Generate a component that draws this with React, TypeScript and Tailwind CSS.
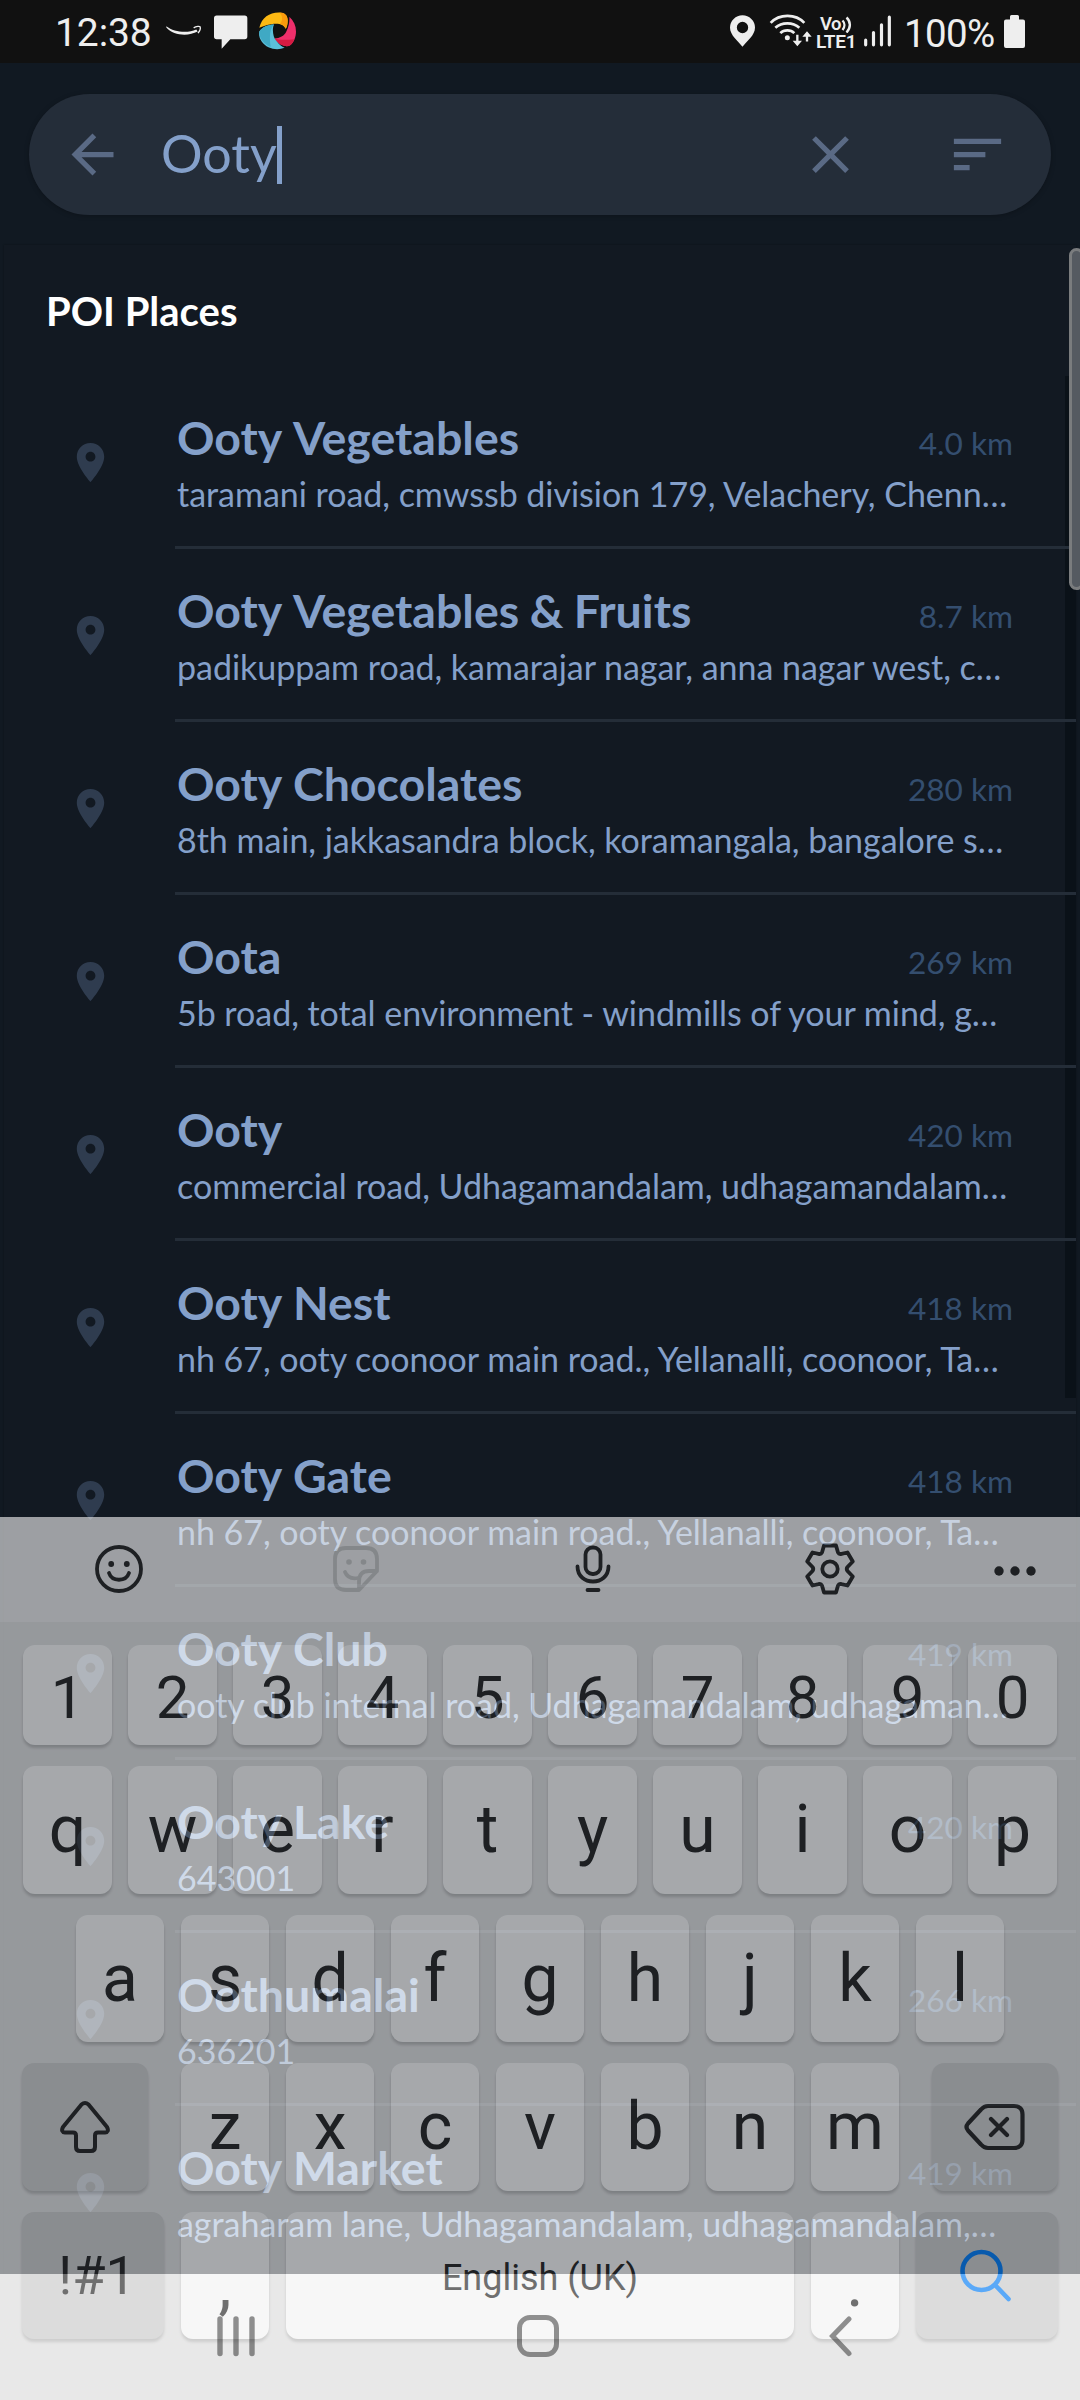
import type { ReactNode } from "react";

type Place = { name: string; distance: string; address: string };

const places: Place[] = [
  { name: "Ooty Vegetables", distance: "4.0 km", address: "taramani road, cmwssb division 179, Velachery, Chenn…" },
  { name: "Ooty Vegetables & Fruits", distance: "8.7 km", address: "padikuppam road, kamarajar nagar, anna nagar west, c…" },
  { name: "Ooty Chocolates", distance: "280 km", address: "8th main, jakkasandra block, koramangala, bangalore s…" },
  { name: "Oota", distance: "269 km", address: "5b road, total environment - windmills of your mind, g…" },
  { name: "Ooty", distance: "420 km", address: "commercial road, Udhagamandalam, udhagamandalam…" },
  { name: "Ooty Nest", distance: "418 km", address: "nh 67, ooty coonoor main road., Yellanalli, coonoor, Ta…" },
  { name: "Ooty Gate", distance: "418 km", address: "nh 67, ooty coonoor main road., Yellanalli, coonoor, Ta…" },
  { name: "Ooty Club", distance: "419 km", address: "ooty club internal road, Udhagamandalam, udhagaman…" },
  { name: "Ooty Lake", distance: "420 km", address: "643001" },
  { name: "Oothumalai", distance: "266 km", address: "636201" },
  { name: "Ooty Market", distance: "419 km", address: "agraharam lane, Udhagamandalam, udhagamandalam,…" },
];

function StatusBar() {
  return (
    <header className="flex h-[63px] shrink-0 items-center justify-between bg-[#111111] pl-[55px] pr-[55px] font-['Roboto',sans-serif] text-[#eeeeee]">
      <div className="flex items-center">
        <span className="w-[97px] pt-[3px] text-[39px] leading-[45px] tracking-[-0.1px]">12:38</span>
        <svg className="ml-[13px] h-[40px] w-[38px]" viewBox="45 19.5 114 120" fill="#eee">
          <path d="M49 62C72 80 112 84 139 72L143 78C115 93 71 91 49 66Z" />
          <path d="M131 67C139 62 149 62 150.500 64C152 69 149 77 144 83" fill="none" stroke="#eee" strokeWidth="4" />
        </svg>
        <svg className="ml-[11px] h-[40px] w-[34px]" viewBox="191 19.500 102 120" fill="#eee">
          <path d="M199 30H283q8 0 8 8V93q0 8-8 8H240L214 130V101H199q-8 0-8-8V38q0-8 8-8z" />
        </svg>
        <svg className="ml-[11px] h-[40px] w-[38px]" viewBox="327 19.500 114 120">
          <path fill="#FDB913" d="M328 67C335 35 360 20 388 21C405 21 413 30 413 45C413 55 411 65 407 70C402 57 385 52 365 56C350 58 338 62 328 67Z" />
          <path fill="#FB9A0C" d="M388 21C405 21 413 30 413 45C413 55 411 65 407 70C404 62 398 57 390 55C400 45 398 30 388 21Z" />
          <path fill="#EE2F6B" d="M418 34C438 52 443 78 433 103C424 122 415 124 402 121C388 117 378 108 373 99C390 98 402 92 409 78C416 64 419 50 418 34Z" />
          <path fill="#D51B42" d="M373 99C388 104 408 104 433 101C424 122 415 124 402 121C388 117 378 108 373 99Z" />
          <path fill="#5BBFD9" d="M328 78C336 66 352 58 372 57C365 72 370 96 378 105C388 117 395 123 404 127C380 136 350 130 335 108C328 97 326 88 328 78Z" />
          <path fill="#3FA9C4" d="M328 78C336 66 352 58 372 57C360 70 357 90 362 124C348 120 326 100 328 78Z" />
        </svg>
      </div>
      <div className="flex items-center">
        <svg className="h-[40px] w-[25px]" viewBox="27 19.500 75 120" fill="#eee">
          <path fillRule="evenodd" d="M64.500 124C52 107 27 90 27 66A37.500 36.500 0 0 1 102 66C102 90 77 107 64.500 124ZM64.500 49a17 17 0 1 0 0 34a17 17 0 1 0 0-34Z" />
        </svg>
        <svg className="ml-[14px] h-[40px] w-[43px]" viewBox="144 19.500 129 120" fill="none" stroke="#eee" strokeWidth="8">
          <path d="M149 52C175 24 224 24 250 52M163 67C182 49 216 49 235 67M178 83C189 72 209 72 220 83" />
          <path d="M229 88V114M258 108V84" strokeWidth="7" />
          <circle cx="199" cy="97" r="7.500" fill="#eee" stroke="none" />
          <path fill="#eee" stroke="none" d="M215 106H243L229 122ZM244 94H272L258 77Z" />
        </svg>
        <div className="ml-[4px] flex h-[40px] w-[42px] flex-col pt-[3px] font-semibold leading-[18px]">
          <div className="flex pl-[4px]">
            <span className="h-[17px] w-[21px] text-[18.5px] tracking-[-0.5px]">Vo</span>
            <svg className="mt-px h-[17px] w-[12px]" viewBox="0 0 12 17" fill="none" stroke="#eee" strokeWidth="2.400">
              <path d="M1.500 4.500C4 7 4 11 1.500 14M5.500 1.500C10 5.500 10 12 5.500 16.500" />
            </svg>
          </div>
          <span className="whitespace-nowrap text-[19px] tracking-[-0.2px]">LTE1</span>
        </div>
        <svg className="ml-[6px] h-[40px] w-[28px]" viewBox="429 19.500 84 120" stroke="#eee" strokeWidth="9.500" strokeLinecap="round">
          <path d="M434 104V118M457.500 81V118M481.500 58V118M505 35V118" />
        </svg>
        <span className="ml-[12px] w-[93px] pt-[3px] text-[38.5px] leading-[45px] tracking-[-0.6px]">100%</span>
        <svg className="ml-[7px] h-[34px] w-[21px]" viewBox="0 0 21 34" fill="#eee">
          <path d="M6 1.500q0-1.500 1.500-1.500h6q1.500 0 1.500 1.500V4.500H19q2 0 2 2V31q0 2-2 2H2q-2 0-2-2V6.500q0-2 2-2H6Z" />
        </svg>
      </div>
    </header>
  );
}

function SearchBar() {
  return (
    <div className="mx-[29px] mt-[31px] flex h-[121px] shrink-0 items-center rounded-full bg-[#242d39] pl-[32px] shadow-[0_1px_5px_rgba(0,0,0,0.25)]">
      <svg className="size-[63px]" viewBox="0 0 24 24" fill="#5a6a85">
        <path d="M20 11H7.830l5.590-5.590L12 4l-8 8 8 8 1.410-1.410L7.830 13H20v-2z" />
      </svg>
      <div className="ml-[37px] flex items-center">
        <span className="mb-[3px] w-[116px] text-[52px] leading-[62px] text-[#84a0ca]">Ooty</span>
        <span className="h-[58px] w-[5px] shrink-0 bg-[#84a0ca]" />
      </div>
      <svg className="ml-auto size-[63px]" viewBox="0 0 24 24" fill="#5a6a85">
        <path d="M19 6.410L17.590 5 12 10.590 6.410 5 5 6.410 10.590 12 5 17.590 6.410 19 12 13.410 17.590 19 19 17.590 13.410 12z" />
      </svg>
      <svg className="ml-[84px] mr-[42px] size-[63px]" viewBox="0 0 24 24" fill="#5a6a85">
        <path d="M3 18h6v-2H3v2zM3 6v2h18V6H3zm0 7h12v-2H3v2z" />
      </svg>
    </div>
  );
}

function PlaceRow({ place }: { place: Place }) {
  return (
    <li className="relative flex h-[173px] shrink-0">
      <svg className="ml-[63px] mt-[63px] size-[47px] shrink-0" viewBox="0 0 24 24" fill="#2f3c4f">
        <path d="M12 2C8.130 2 5 5.130 5 9c0 5.250 7 13 7 13s7-7.750 7-13c0-3.870-3.130-7-7-7zm0 9.500c-1.380 0-2.500-1.120-2.500-2.500s1.120-2.500 2.500-2.500 2.500 1.120 2.500 2.500-1.120 2.500-2.500 2.500z" />
      </svg>
      <div className="ml-[61px] flex-1 border-b-[3px] border-[#242d38] pl-[2px] pr-[63px] pt-[33px]">
        <div className="flex h-[56px] items-baseline justify-between">
          <h3 className="flex gap-[10.5px] text-[46.5px] font-bold leading-[56px] text-[#84a0ca]">
            {place.name.split(" ").map((word) => (
              <span key={word}>{word}</span>
            ))}
          </h3>
          <span className="text-[31.6px] leading-[40px] text-[#344e6f]">{place.distance}</span>
        </div>
        <p className="mt-2 whitespace-nowrap text-[34px] leading-[41px] tracking-[-0.03px] text-[#84a0ca]">{place.address}</p>
      </div>
    </li>
  );
}

function Results() {
  return (
    <section className="relative mx-1 mt-[30px] flex flex-1 flex-col bg-[#121922] shadow-[0_0_2px_rgba(0,0,0,0.3)]">
      <h2 className="ml-[42px] mt-[42px] text-[40px] font-bold leading-[48px] text-white">POI Places</h2>
      <div className="absolute right-0 top-[131px] h-[1022px] w-[11px] bg-[#0a1118]" />
      <ul className="mt-[41px] flex flex-col">
        {places.map((p) => (
          <PlaceRow key={p.name} place={p} />
        ))}
      </ul>
      <div className="absolute -right-2 top-[3px] h-[342px] w-[15px] rounded-[10px] border-[3px] border-[#7a7c7e] bg-[#555a61]" />
    </section>
  );
}

function Key({ children, className = "w-[89px] bg-[#fcfcfc]" }: { children?: ReactNode; className?: string }) {
  return (
    <button className={`flex h-full shrink-0 items-center justify-center rounded-[12px] shadow-[0_3px_3px_rgba(0,0,0,0.18)] ${className}`}>
      {children}
    </button>
  );
}

function Toolbar() {
  return (
    <div className="flex h-[105px] items-center bg-[#eeeeee] pb-[2px]">
      <svg className="ml-[93px] size-[52px]" viewBox="-26 -26 52 52" fill="none" stroke="#252525" strokeWidth="3.800" strokeLinecap="round">
        <circle r="22" />
        <circle cx="-7.800" cy="-5" r="2.900" fill="#252525" stroke="none" />
        <circle cx="7.800" cy="-5" r="2.900" fill="#252525" stroke="none" />
        <path d="M-10 4C-7 13 7 13 10 4" />
      </svg>
      <svg className="ml-[185px] size-[52px]" viewBox="-26 -26 52 52" fill="none" stroke="#c7c7c7" strokeWidth="3.800" strokeLinecap="round" strokeLinejoin="round">
        <path d="M2 21H-10Q-21 21-21 10V-10Q-21-21-10-21H10Q21-21 21-10V2L3 21V13Q3 2 13 2H21" />
        <circle cx="-7" cy="-7" r="2.800" fill="#c7c7c7" stroke="none" />
        <circle cx="7.500" cy="-7" r="2.800" fill="#c7c7c7" stroke="none" />
        <path d="M-11 3C-9 8-4 10 2 9" />
      </svg>
      <svg className="ml-[185px] size-[52px]" viewBox="-26 -26 52 52" fill="none" stroke="#252525" strokeWidth="3.800" strokeLinecap="round">
        <rect x="-7.500" y="-21.500" width="15" height="26.500" rx="7" />
        <path d="M-15.500-2.500C-15.500 17.500 15.500 17.500 15.500-2.500M-5.500 21H5.500" />
      </svg>
      <svg className="ml-[185px] size-[52px]" viewBox="-26 -26 52 52" fill="none" stroke="#252525" strokeWidth="3.800" strokeLinejoin="round">
        <circle r="7.700" />
        <path d="M-6-23.500H6L8-16.500Q9-14.500 11.500-15.200L17.500-16.500L22.800-7.500L17.500-2Q16 0 17.500 2L22.800 7.500L17.500 16.500L11.500 15.200Q9 14.500 8 16.500L6 23.500H-6L-8 16.500Q-9 14.500-11.500 15.200L-17.500 16.500L-22.800 7.500L-17.500 2Q-16 0-17.500-2L-22.800-7.500L-17.500-16.500L-11.500-15.200Q-9-14.500-8-16.500Z" />
      </svg>
      <svg className="ml-[133px] size-[52px]" viewBox="-26 -28 52 52" fill="#252525">
        <circle cx="-16" r="4.700" />
        <circle r="4.700" />
        <circle cx="16" r="4.700" />
      </svg>
    </div>
  );
}

function Keyboard() {
  return (
    <div className="absolute inset-x-0 bottom-0 h-[883px] bg-[#e4e4e4] font-['Roboto',sans-serif] text-[66px] leading-none text-[#252525] opacity-63">
      <Toolbar />
      <div className="mt-[23px] flex h-[100px] gap-4 pl-[23px]">
        {"1234567890".split("").map((c) => (
          <Key key={c}>
            <span className="pt-[5px] text-[60px]">{c}</span>
          </Key>
        ))}
      </div>
      <div className="mt-[21px] flex h-[128px] gap-4 pl-[23px]">
        {"qwertyuiop".split("").map((c) => (
          <Key key={c}>{c}</Key>
        ))}
      </div>
      <div className="mt-[21px] flex h-[127px] gap-[17px] pl-[76px]">
        {"asdfghjkl".split("").map((c) => (
          <Key key={c} className="w-[88px] bg-[#fcfcfc]">{c}</Key>
        ))}
      </div>
      <div className="mt-[21px] flex h-[128px] justify-between px-[22px]">
        <Key className="w-[126px] bg-[#d1d1d1]">
          <svg className="size-[56px]" viewBox="-28 -28 56 56" fill="none" stroke="#252525" strokeWidth="4" strokeLinejoin="round">
            <path d="M-3.500-22.500Q0-25.500 3.500-22.500L22 0Q24.500 5 20 5.500H13Q10 5.500 10 8.500V20Q10 24 6 24H-5Q-9 24-9 20V8.500Q-9 5.500-12 5.500H-20Q-24.500 5-22 0Z" />
          </svg>
        </Key>
        <div className="flex gap-[17px]">
          {"zxcvbnm".split("").map((c) => (
            <Key key={c} className="w-[88px] bg-[#fcfcfc]">{c}</Key>
          ))}
        </div>
        <Key className="w-[126px] bg-[#d1d1d1]">
          <svg className="size-[64px]" viewBox="-32 -32 64 64" fill="none" stroke="#252525" strokeWidth="4.200" strokeLinejoin="round" strokeLinecap="round">
            <path d="M-7-21H19Q27.500-21 27.500-12.500V12.500Q27.500 21 19 21H-7Q-11 21-14 17.500L-27 3.500Q-30 0-27-3.500L-14-17.500Q-11-21-7-21ZM-4-8L12 8M12-8L-4 8" />
          </svg>
        </Key>
      </div>
      <div className="mt-[21px] flex h-[127px] gap-[17px] px-[22px]">
        <Key className="w-[142px] bg-[#d1d1d1]">
          <span className="pl-2 text-[54px]">!#1</span>
        </Key>
        <Key className="w-[88px] bg-[#fcfcfc] pt-[18px]">,</Key>
        <Key className="w-[508px] bg-[#fcfcfc] pt-1">
          <span className="text-[36px]">English (UK)</span>
        </Key>
        <Key className="w-[88px] bg-[#fcfcfc] pt-[16px]">.</Key>
        <Key className="w-[142px] bg-[#d1d1d1]">
          <svg className="size-[60px]" viewBox="-30 -30 60 60" fill="none" stroke="#0381fe" strokeWidth="4.600" strokeLinecap="round">
            <circle cx="-5.500" cy="-5" r="19" />
            <path d="M8.500 9.500L21.500 23" />
          </svg>
        </Key>
      </div>
    </div>
  );
}

function NavBar() {
  return (
    <nav className="absolute inset-x-0 bottom-0 flex h-[126px] items-start pt-[41px] opacity-42">
      <svg className="ml-[216px] h-[42px] w-[40px]" viewBox="0 0 40 42" stroke="#000" strokeWidth="5.400" strokeLinecap="round">
        <path d="M4 4V38.500M20 4V38.500M36 4V38.500" />
      </svg>
      <div className="ml-[261px] h-[42px] w-[42px] rounded-[13px] border-[5px] border-black" />
      <svg className="ml-[267px] h-[42px] w-[30px]" viewBox="0 0 30 42" fill="none" stroke="#000" strokeWidth="5" strokeLinecap="round">
        <path d="M23 4L6.500 21L23 38.500" />
      </svg>
    </nav>
  );
}

export default function App() {
  return (
    <div className="relative h-[2400px] w-[1080px] overflow-hidden bg-[#f0f0f0] font-['Lato',sans-serif]">
      <main className="flex h-[2274px] flex-col overflow-hidden bg-[#111922]">
        <StatusBar />
        <SearchBar />
        <Results />
      </main>
      <Keyboard />
      <NavBar />
    </div>
  );
}
